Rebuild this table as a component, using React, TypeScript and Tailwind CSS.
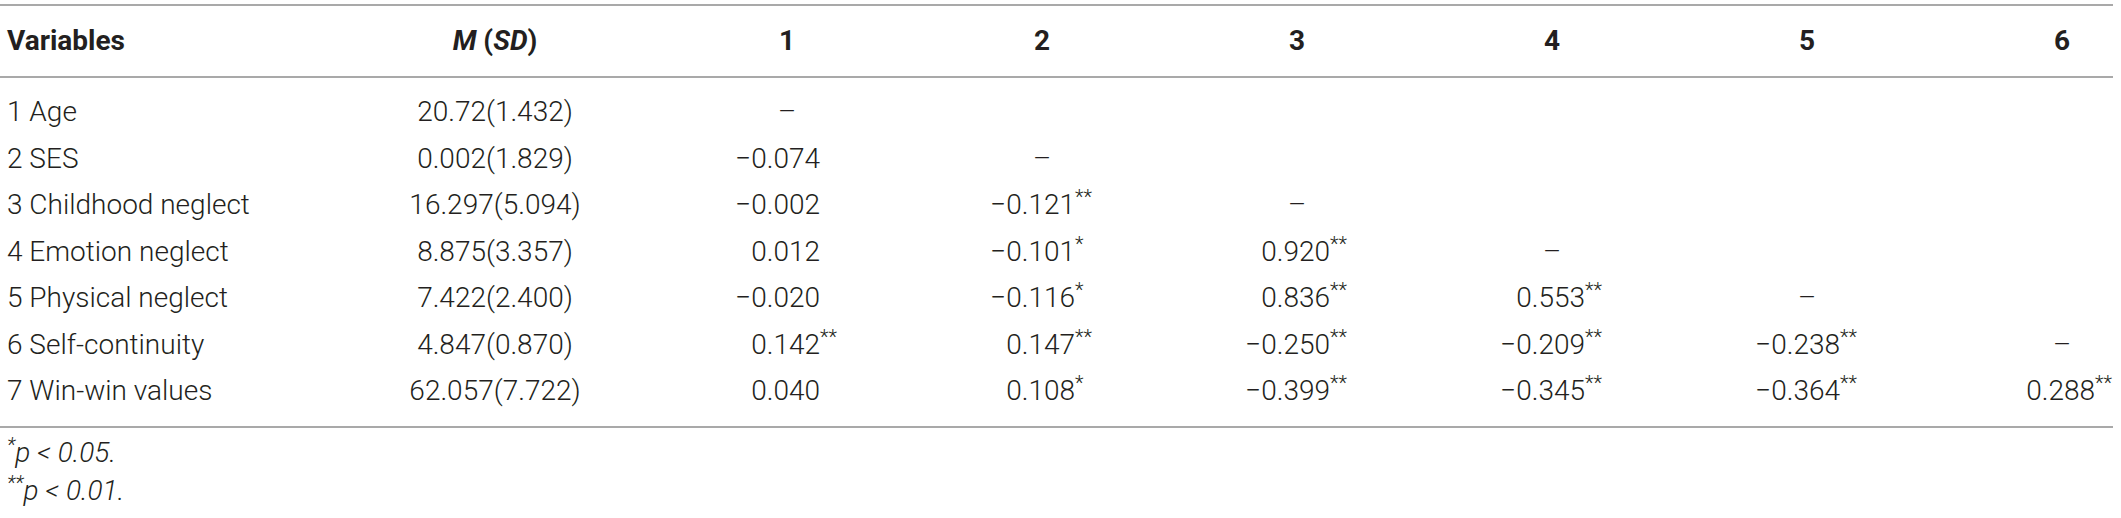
import React from "react";

type Cell = { v: string; s?: string } | "dash" | null;

const rows: { label: string; m: string; cells: Cell[] }[] = [
  { label: "1 Age", m: "20.72(1.432)", cells: ["dash"] },
  { label: "2 SES", m: "0.002(1.829)", cells: [{ v: "\u22120.074" }, "dash"] },
  { label: "3 Childhood neglect", m: "16.297(5.094)", cells: [{ v: "\u22120.002" }, { v: "\u22120.121", s: "**" }, "dash"] },
  { label: "4 Emotion neglect", m: "8.875(3.357)", cells: [{ v: "0.012" }, { v: "\u22120.101", s: "*" }, { v: "0.920", s: "**" }, "dash"] },
  { label: "5 Physical neglect", m: "7.422(2.400)", cells: [{ v: "\u22120.020" }, { v: "\u22120.116", s: "*" }, { v: "0.836", s: "**" }, { v: "0.553", s: "**" }, "dash"] },
  { label: "6 Self-continuity", m: "4.847(0.870)", cells: [{ v: "0.142", s: "**" }, { v: "0.147", s: "**" }, { v: "\u22120.250", s: "**" }, { v: "\u22120.209", s: "**" }, { v: "\u22120.238", s: "**" }, "dash"] },
  { label: "7 Win-win values", m: "62.057(7.722)", cells: [{ v: "0.040" }, { v: "0.108", s: "*" }, { v: "\u22120.399", s: "**" }, { v: "\u22120.345", s: "**" }, { v: "\u22120.364", s: "**" }, { v: "0.288", s: "**" }] },
];

const gridCols = "grid grid-cols-[330px_330px_255px_255px_255px_255px_255px_1fr]";

function NumCell({ c }: { c: Cell }) {
  if (c === null) return <div />;
  if (c === "dash")
    return (
      <div className="pl-[62px] flex items-baseline">
        <div className="w-[130px] text-center">{"\u2013"}</div>
      </div>
    );
  return (
    <div className="pl-[62px] flex items-baseline">
      <div className="w-[98px] text-right whitespace-nowrap">{c.v}</div>
      <div className="w-0 whitespace-nowrap">{c.s ? <sup className="text-[20px]">{c.s}</sup> : null}</div>
    </div>
  );
}

export default function App() {
  return (
    <div className="w-[2121px] h-[518px] bg-white text-[#231f20] font-['Roboto','Liberation_Sans',sans-serif] text-[28px] font-light overflow-hidden">
      <div className="pt-[4px] w-[2113px]">
        <div className="border-t-2 border-[#a9a9a9]" />
        <div className={`${gridCols} h-[70px] items-center font-bold`}>
          <div className="pl-[7px]">Variables</div>
          <div className="text-center">
            <span className="italic">M</span> (<span className="italic">SD</span>)
          </div>
          {[1, 2, 3, 4, 5, 6].map((n) => (
            <div key={n} className="pl-[62px]">
              <div className="w-[130px] text-center">{n}</div>
            </div>
          ))}
        </div>
        <div className="border-t-2 border-[#a9a9a9]" />
        <div className="pt-[11px] pb-[11px]">
          {rows.map((r) => {
            const cells: Cell[] = [...r.cells];
            while (cells.length < 6) cells.push(null);
            return (
              <div key={r.label} className={`${gridCols} h-[46.5px] items-center`}>
                <div className="pl-[7px] whitespace-nowrap">{r.label}</div>
                <div className="text-center">{r.m}</div>
                {cells.map((c, i) => (
                  <NumCell key={i} c={c} />
                ))}
              </div>
            );
          })}
        </div>
        <div className="border-t-2 border-[#a9a9a9]" />
        <div className="pt-[6px] pl-[7px] italic leading-[38px]">
          <div>
            <sup className="text-[20px]">*</sup>p &lt; 0.05.
          </div>
          <div>
            <sup className="text-[20px]">**</sup>p &lt; 0.01.
          </div>
        </div>
      </div>
    </div>
  );
}
